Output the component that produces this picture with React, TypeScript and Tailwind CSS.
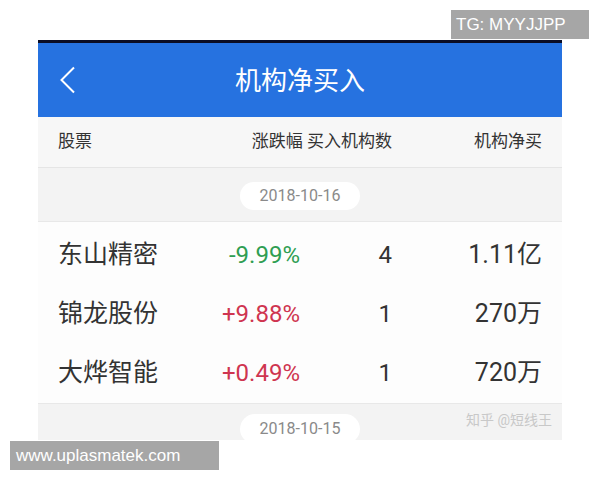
import React from "react";

const rows = [
  { name: "东山精密", chg: "-9.99%", up: false, n: "4", v: "1.11亿" },
  { name: "锦龙股份", chg: "+9.88%", up: true, n: "1", v: "270万" },
  { name: "大烨智能", chg: "+0.49%", up: true, n: "1", v: "720万" },
];

const cjk = { fontFamily: 'Roboto, "Noto Sans CJK SC", sans-serif' };

export default function App() {
  return (
    <div className="relative w-[600px] h-[480px] bg-white overflow-hidden" style={cjk}>
      <div className="ml-[38px] pt-[40px] w-[524px] flex flex-col">
        <div className="h-[3px] shrink-0 bg-[#0b0d24]" />
        <div className="h-[74px] shrink-0 bg-[#2672e0] flex items-center relative">
          <svg className="absolute left-[21px] top-[23px]" width="17" height="28" viewBox="0 0 17 28">
            <path d="M15 1.5 L2.5 14 L15 26.5" fill="none" stroke="white" strokeWidth="2" />
          </svg>
          <div className="flex-1 text-center text-white text-[26px] leading-none pt-[2px]">机构净买入</div>
        </div>
        <div className="h-[51px] shrink-0 bg-[#f7f7f7] border-b border-[#e5e5e5] flex items-center px-[20px] text-[17px] text-[#333]">
          <div className="w-[172px]">股票</div>
          <div className="w-[162px] text-right">涨跌幅 买入机构数</div>
          <div className="flex-1 text-right">机构净买</div>
        </div>
        <div className="h-[54px] shrink-0 bg-[#f3f3f3] border-b border-[#e8e8e8] flex items-center justify-center">
          <div className="w-[120px] h-[28px] mt-[2px] rounded-full bg-white flex items-center justify-center text-[16px] text-[#8a8a8a]">
            2018-10-16
          </div>
        </div>
        <div className="shrink-0 bg-[#fdfdfd] pt-[3px] pb-px border-b border-[#e8e8e8]">
          {rows.map((r) => (
            <div key={r.name} className="h-[59px] flex items-center px-[20px] text-[#333]">
              <div className="w-[150px] text-[25px]">{r.name}</div>
              <div
                className={`w-[92px] text-right text-[24px] ${r.up ? "text-[#cf3550]" : "text-[#2f9e52]"}`}
              >
                {r.chg}
              </div>
              <div className="w-[92px] text-right text-[24px]">{r.n}</div>
              <div className="flex-1 text-right text-[25px]">{r.v}</div>
            </div>
          ))}
        </div>
        <div className="h-[36px] shrink-0 overflow-hidden bg-[#f3f3f3] flex justify-center relative">
          <div className="w-[120px] h-[30px] mt-[10px] shrink-0 rounded-full bg-white flex items-center justify-center text-[16px] text-[#8a8a8a]">
            2018-10-15
          </div>
          <div className="absolute right-[10px] top-[6px] text-[14px] text-[#c8c8c8]">知乎 @短线王</div>
        </div>
      </div>
      <div
        className="absolute left-[451px] top-[10px] w-[138px] h-[29px] bg-[#a6a6a6] text-white text-[17px] flex items-center pl-[5px]"
        style={{ fontFamily: '"Liberation Sans", Arial, sans-serif' }}
      >
        TG: MYYJJPP
      </div>
      <div
        className="absolute left-[10px] top-[441px] w-[209px] h-[29px] bg-[#a6a6a6] text-white text-[17px] flex items-center pl-[6px]"
        style={{ fontFamily: '"Liberation Sans", Arial, sans-serif' }}
      >
        www.uplasmatek.com
      </div>
    </div>
  );
}
